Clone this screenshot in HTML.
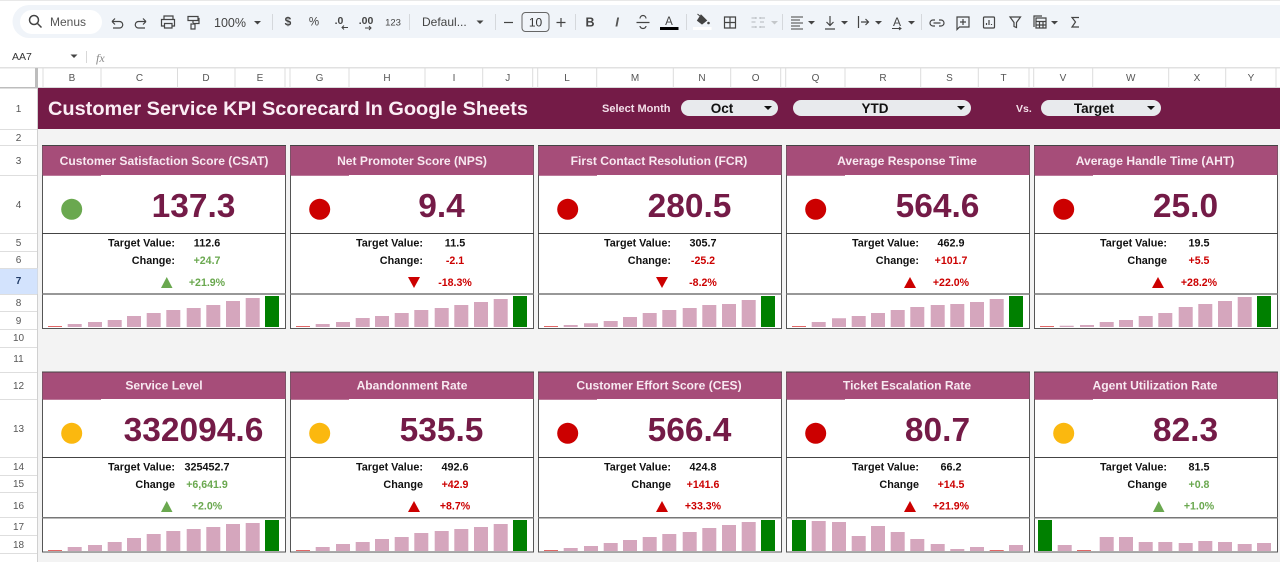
<!DOCTYPE html>
<html><head><meta charset="utf-8"><title>Customer Service KPI Scorecard</title>
<style>
html,body{margin:0;padding:0;background:#fff;width:1280px;height:562px;overflow:hidden}
svg{display:block}
text{font-family:"Liberation Sans",sans-serif}
.ch{font-size:10px;fill:#555;text-anchor:middle}
.rh{font-size:10px;fill:#555;text-anchor:middle}
.ic{fill:none;stroke:#444;stroke-width:1.2}
.ict{fill:#444;stroke:none}
.tb{font-size:12px;fill:#444}
.h{font-size:12.1px;font-weight:700;fill:#f8e9f1;text-anchor:middle}
.v{font-size:33.5px;font-weight:700;fill:#741b47;text-anchor:middle}
.l{font-size:10.8px;font-weight:700;fill:#111;text-anchor:end}
.t{font-size:10.8px;font-weight:700;fill:#111;text-anchor:middle}
.g{font-size:10.6px;font-weight:700;fill:#6aa84f;text-anchor:middle}
.r{font-size:10.6px;font-weight:700;fill:#cc0000;text-anchor:middle}
.dd{font-size:13.5px;font-weight:700;fill:#111;text-anchor:middle}
.f{fill:#fff;stroke:#555;stroke-width:1}
.d{stroke:#444;stroke-width:1}
.d2{stroke:#777;stroke-width:1.5}
.b{fill:none;stroke:#d5a6bd;stroke-width:14}
.bg{fill:none;stroke:#008000;stroke-width:14}
.br{fill:none;stroke:#e06666;stroke-width:14}
</style></head><body>
<svg width="1280" height="562" viewBox="0 0 1280 562" xmlns="http://www.w3.org/2000/svg">
<rect width="1280" height="562" fill="#fff"/>
<rect y="0" width="1280" height="1" fill="#e8e8e8"/>
<!-- toolbar -->
<path d="M1280 5H29a16.500 16.500 0 0 0 0 33H1280z" fill="#f0f4f9"/>
<rect x="20" y="10" width="82" height="24" rx="12" fill="#fff"/>
<circle cx="34" cy="20" r="4.500" class="ic" style="stroke-width:1.500"/><path d="M37.500 23.500l4 4" class="ic" style="stroke-width:1.500"/>
<text x="50" y="26" class="tb" style="fill:#555">Menus</text>
<path d="M112 21.500h7.500a3.200 3.200 0 0 1 0 6.500H113M112 21.500l3-3M112 21.500l3 3" class="ic"/>
<path d="M146 21.500h-7.500a3.200 3.200 0 0 0 0 6.500H145M146 21.500l-3-3M146 21.500l-3 3" class="ic"/>
<path d="M164 20v-4h9v4M164 26h-2.500v-6.500h13V26H172M164.500 23.500h7.500v4.500h-7.500z" class="ic"/>
<path d="M188 16.500h10v4h-10zM193 20.500v2.500M191 24h4v5h-4z M198 18.500h1v5h-6" class="ic"/>
<text x="214" y="27" font-size="12.500" fill="#444">100%</text>
<path d="M254 21h7l-3.500 3.500z" class="ict"/>
<path d="M272.500 14v16" stroke="#d5d8dc"/>
<text x="288" y="25.500" font-size="12" font-weight="700" fill="#444" text-anchor="middle">$</text>
<text x="314" y="25.500" font-size="11.500" fill="#444" text-anchor="middle">%</text>
<text x="339" y="24" font-size="10.500" font-weight="700" fill="#444" text-anchor="middle">.0</text>
<path d="M348 27.500h-6M344 25.500l-2 2 2 2" class="ic" style="stroke-width:1"/>
<text x="366" y="24" font-size="10.500" font-weight="700" fill="#444" text-anchor="middle">.00</text>
<path d="M365 28h6M369 26l2 2-2 2" class="ic" style="stroke-width:1"/>
<text x="393" y="25.500" font-size="9.500" fill="#444" text-anchor="middle">123</text>
<path d="M409.500 14v16" stroke="#d5d8dc"/>
<text x="422" y="26" font-size="12" fill="#444">Defaul...</text>
<path d="M476.500 20.500h7l-3.500 3.500z" class="ict"/>
<path d="M495.500 14v16" stroke="#d5d8dc"/>
<path d="M504 22.500h9" class="ic"/>
<rect x="522" y="12.500" width="27" height="19" rx="3.500" fill="#f0f4f9" stroke="#666"/>
<text x="535.500" y="26.500" font-size="12" fill="#333" text-anchor="middle">10</text>
<path d="M556.500 22.500h9M561 18v9" class="ic"/>
<path d="M575.500 14v16" stroke="#d5d8dc"/>
<text x="590" y="26.500" font-size="12.500" font-weight="700" fill="#444" text-anchor="middle">B</text>
<text x="617" y="26.500" font-size="13" font-style="italic" font-weight="700" fill="#555" text-anchor="middle">I</text>
<path d="M636.500 22.500h13M640 18.500a3 3 0 0 1 6 0M640 26a3 2.500 0 0 0 6 0" class="ic"/>
<text x="669" y="25" font-size="11.500" fill="#444" text-anchor="middle">A</text>
<rect x="660" y="27" width="18.500" height="3" fill="#000"/>
<path d="M686.500 14v16" stroke="#d5d8dc"/>
<path d="M701 15l5.500 5.500-4.500 3.500-4.500-3.500zM697.500 14l3.500 3" fill="#444" stroke="#444"/>
<circle cx="708.500" cy="23" r="1.300" fill="#444"/>
<rect x="693" y="27" width="18.500" height="3" fill="#fff"/>
<path d="M724.500 17h11v11h-11zM730 17v11M724.500 22.500h11" class="ic"/>
<path d="M751.500 18h5M751.500 22h4M751.500 27h5M760 18h5M760 22h4M760 27h5M756 17v2M760 17v2M756 26v2M760 26v2" class="ic" style="stroke:#b5b9bd;stroke-width:1"/>
<path d="M771 21h7l-3.500 3.500z" fill="#c4c7ca"/>
<path d="M782.500 14v16" stroke="#d5d8dc"/>
<path d="M791 17h12M791 20h9M791 23h12M791 26h9M791 29h12" class="ic" style="stroke-width:1"/>
<path d="M808 21h7l-3.500 3.500z" class="ict"/>
<path d="M830 16v9M826.500 22l3.500 3.500 3.500-3.500M825 29h10" class="ic"/>
<path d="M841 21h7l-3.500 3.500z" class="ict"/>
<path d="M858.500 16v12M861 22h7M865.500 19l3 3-3 3" class="ic"/>
<path d="M875 21h7l-3.500 3.500z" class="ict"/>
<text x="897" y="26" font-size="12" fill="#444" text-anchor="middle">A</text>
<path d="M892 28.500h9M899 27l2 1.500-2 1.500" class="ic" style="stroke-width:1"/>
<path d="M908 21h7l-3.500 3.500z" class="ict"/>
<path d="M921.500 14v16" stroke="#d5d8dc"/>
<path d="M935 20h-2a3 3 0 0 0 0 6h2M939 20h2a3 3 0 0 1 0 6H939M933.500 23h7" class="ic"/>
<path d="M957 17h12v10h-9.500l-2.500 2.500zM963 19v6M960 22h6" class="ic"/>
<rect x="983.500" y="17" width="11" height="11" rx="1" class="ic"/><path d="M986.500 25v-2M989 25v-5M991.500 25v-1" class="ic"/>
<path d="M1010 17h10.500l-4 5.500v5l-2.500-1v-4z" class="ic"/>
<path d="M1034 27v-11h8M1036 18h10v10h-10zM1036 21.500h10M1039.500 21.500V28M1043 21.500V28M1036 25h10" class="ic"/>
<path d="M1051 21h7l-3.500 3.500z" class="ict"/>
<path d="M1079 17.500h-7l3.500 4.500-3.500 5h7" class="ic"/>
<!-- formula bar -->
<text x="12" y="60" font-size="10.500" fill="#333">AA7</text>
<path d="M70.500 54.500h7l-3.500 3.500z" class="ict"/>
<path d="M86.500 51v12" stroke="#d8d8d8"/>
<text x="96" y="62" font-size="12" font-style="italic" fill="#888" style="font-family:'Liberation Serif',serif">fx</text>
<!-- sheet bg -->
<rect x="0" y="67" width="1280" height="21" fill="#fff"/>
<rect x="38" y="88" width="1242" height="474" fill="#f3f3f3"/>
<rect y="67" width="1280" height="1.500" fill="#e1e1e1"/>
<rect x="0" y="87" width="38" height="1.500" fill="#bdbdbd"/>
<rect x="35" y="68" width="3" height="20" fill="#bdbdbd"/>
<path d="M38 87.500H1280" stroke="#d9d9d9"/>
<path d="M37.500 88V562" stroke="#d0d0d0"/>
<path d="M43 68v20M101 68v20M177.500 68v20M235 68v20M285 68v20M290 68v20M349 68v20M425 68v20M482.700 68v20M532.700 68v20M537.700 68v20M596.700 68v20M673.300 68v20M730.700 68v20M780.700 68v20M785.700 68v20M845 68v20M920.700 68v20M978.300 68v20M1029 68v20M1033.700 68v20M1092.700 68v20M1168.700 68v20M1225.700 68v20M1276 68v20" stroke="#dcdcdc"/>
<text class="ch" x="72" y="81">B</text><text class="ch" x="139.500" y="81">C</text><text class="ch" x="206" y="81">D</text><text class="ch" x="260" y="81">E</text>
<text class="ch" x="319.500" y="81">G</text><text class="ch" x="387" y="81">H</text><text class="ch" x="454" y="81">I</text><text class="ch" x="507.700" y="81">J</text>
<text class="ch" x="567" y="81">L</text><text class="ch" x="635" y="81">M</text><text class="ch" x="702" y="81">N</text><text class="ch" x="755.700" y="81">O</text>
<text class="ch" x="815.500" y="81">Q</text><text class="ch" x="883" y="81">R</text><text class="ch" x="949.500" y="81">S</text><text class="ch" x="1003.500" y="81">T</text>
<text class="ch" x="1063" y="81">V</text><text class="ch" x="1130.700" y="81">W</text><text class="ch" x="1197" y="81">X</text><text class="ch" x="1251" y="81">Y</text>
<!-- row headers -->
<rect x="0" y="268" width="37.500" height="26" fill="#d3e3fd"/>
<path d="M0 129.500h37M0 145.500h37M0 175.500h37M0 233.500h37M0 251.500h37M0 268.500h37M0 294.500h37M0 311.500h37M0 329.500h37M0 347.500h37M0 372.500h37M0 399.500h37M0 457.500h37M0 475.500h37M0 492.500h37M0 517.500h37M0 535.500h37M0 553.500h37" stroke="#dedede"/>
<text class="rh" x="18.500" y="112">1</text><text class="rh" x="18.500" y="141">2</text><text class="rh" x="18.500" y="164">3</text><text class="rh" x="18.500" y="208">4</text><text class="rh" x="18.500" y="246">5</text><text class="rh" x="18.500" y="263">6</text><text class="rh" x="18.500" y="284" style="font-weight:700;fill:#1f3a66">7</text><text class="rh" x="18.500" y="306">8</text><text class="rh" x="18.500" y="324">9</text><text class="rh" x="18.500" y="341">10</text><text class="rh" x="18.500" y="362">11</text><text class="rh" x="18.500" y="389">12</text><text class="rh" x="18.500" y="432">13</text><text class="rh" x="18.500" y="470">14</text><text class="rh" x="18.500" y="487">15</text><text class="rh" x="18.500" y="509">16</text><text class="rh" x="18.500" y="530">17</text><text class="rh" x="18.500" y="548">18</text>
<!-- title band -->
<rect x="38" y="88" width="1242" height="41" fill="#741b47"/>
<text x="48" y="115" font-size="19" font-weight="700" fill="#fbeef5" textLength="480" lengthAdjust="spacingAndGlyphs">Customer Service KPI Scorecard In Google Sheets</text>
<text x="602" y="112" font-size="11" font-weight="700" fill="#f3dfe9">Select Month</text>
<rect x="681" y="100" width="97" height="16" rx="8" fill="#e8eaed"/>
<text class="dd" x="722" y="113">Oct</text><path d="M764 106h8l-4 4z" fill="#111"/>
<rect x="793" y="100" width="178" height="16" rx="8" fill="#e8eaed"/>
<text class="dd" x="875" y="113">YTD</text><path d="M957 106h8l-4 4z" fill="#111"/>
<text x="1016" y="112" font-size="10.500" font-weight="700" fill="#f3dfe9">Vs.</text>
<rect x="1041" y="100" width="120" height="16" rx="8" fill="#e8eaed"/>
<text class="dd" x="1094" y="113">Target</text><path d="M1147 106h8l-4 4z" fill="#111"/>

<!-- ROW 1 -->
<g transform="translate(42,0)">
<rect class="f" x=".5" y="145.500" width="243" height="183"/><rect x=".5" y="146" width="243" height="29" fill="#a64d79"/><path class="d" d="M0 145.500h244"/><path class="d" d="M0 233.500h244"/><path class="d2" d="M0 294h244"/>
<text class="h" x="122" y="165">Customer Satisfaction Score (CSAT)</text>
<circle cx="29.700" cy="209.300" r="10.500" fill="#6aa84f"/><text class="v" x="151.500" y="217">137.3</text>
<text class="l" x="133" y="246.500">Target Value:</text><text class="t" x="165" y="246.500">112.6</text>
<text class="l" x="133" y="264">Change:</text><text class="g" x="165" y="264">+24.7</text>
<path d="M119 288h11.500l-5.750-11z" fill="#6aa84f"/><text class="g" x="165" y="286">+21.9%</text>
<g transform="translate(0,327)"><path class="br" d="M13 0v-1"/><path class="b" d="M32.700 0v-3M53 0v-5M72.700 0v-7M92 0v-11M111.700 0v-14M131.300 0v-17M151.700 0v-19M171.300 0v-22M191 0v-26M210.700 0v-29"/><path class="bg" d="M230 0v-31"/></g>
</g>
<g transform="translate(290,0)">
<rect class="f" x=".5" y="145.500" width="243" height="183"/><rect x=".5" y="146" width="243" height="29" fill="#a64d79"/><path class="d" d="M0 145.500h244"/><path class="d" d="M0 233.500h244"/><path class="d2" d="M0 294h244"/>
<text class="h" x="122" y="165">Net Promoter Score (NPS)</text>
<circle cx="29.700" cy="209.300" r="10.500" fill="#cc0000"/><text class="v" x="151.500" y="217">9.4</text>
<text class="l" x="133" y="246.500">Target Value:</text><text class="t" x="165" y="246.500">11.5</text>
<text class="l" x="133" y="264">Change:</text><text class="r" x="165" y="264">-2.1</text>
<path d="M118 277h12l-6 11z" fill="#cc0000"/><text class="r" x="165" y="286">-18.3%</text>
<g transform="translate(0,327)"><path class="br" d="M13 0v-1"/><path class="b" d="M32.700 0v-3M53 0v-5M72.700 0v-9M92 0v-11M111.700 0v-14M131.300 0v-17M151.700 0v-19M171.300 0v-22M191 0v-25M210.700 0v-28"/><path class="bg" d="M230 0v-31"/></g>
</g>
<g transform="translate(538,0)">
<rect class="f" x=".5" y="145.500" width="243" height="183"/><rect x=".5" y="146" width="243" height="29" fill="#a64d79"/><path class="d" d="M0 145.500h244"/><path class="d" d="M0 233.500h244"/><path class="d2" d="M0 294h244"/>
<text class="h" x="121" y="165">First Contact Resolution (FCR)</text>
<circle cx="29.700" cy="209.300" r="10.500" fill="#cc0000"/><text class="v" x="151.500" y="217">280.5</text>
<text class="l" x="133" y="246.500">Target Value:</text><text class="t" x="165" y="246.500">305.7</text>
<text class="l" x="133" y="264">Change:</text><text class="r" x="165" y="264">-25.2</text>
<path d="M118 277h12l-6 11z" fill="#cc0000"/><text class="r" x="165" y="286">-8.2%</text>
<g transform="translate(0,327)"><path class="br" d="M13 0v-1"/><path class="b" d="M32.700 0v-2M53 0v-3.700M72.700 0v-6M92 0v-10M111.700 0v-14M131.300 0v-17M151.700 0v-19M171.300 0v-22M191 0v-23M210.700 0v-27"/><path class="bg" d="M230 0v-31"/></g>
</g>
<g transform="translate(786,0)">
<rect class="f" x=".5" y="145.500" width="243" height="183"/><rect x=".5" y="146" width="243" height="29" fill="#a64d79"/><path class="d" d="M0 145.500h244"/><path class="d" d="M0 233.500h244"/><path class="d2" d="M0 294h244"/>
<text class="h" x="121" y="165">Average Response Time</text>
<circle cx="29.700" cy="209.300" r="10.500" fill="#cc0000"/><text class="v" x="151.500" y="217">564.6</text>
<text class="l" x="133" y="246.500">Target Value:</text><text class="t" x="165" y="246.500">462.9</text>
<text class="l" x="133" y="264">Change:</text><text class="r" x="165" y="264">+101.7</text>
<path d="M118 288h12l-6-11z" fill="#cc0000"/><text class="r" x="165" y="286">+22.0%</text>
<g transform="translate(0,327)"><path class="br" d="M13 0v-1"/><path class="b" d="M32.700 0v-5M53 0v-8.700M72.700 0v-11M92 0v-14M111.700 0v-17M131.300 0v-20M151.700 0v-22M171.300 0v-23M191 0v-25M210.700 0v-28"/><path class="bg" d="M230 0v-31"/></g>
</g>
<g transform="translate(1034,0)">
<rect class="f" x=".5" y="145.500" width="243" height="183"/><rect x=".5" y="146" width="243" height="29" fill="#a64d79"/><path class="d" d="M0 145.500h244"/><path class="d" d="M0 233.500h244"/><path class="d2" d="M0 294h244"/>
<text class="h" x="121" y="165">Average Handle Time (AHT)</text>
<circle cx="29.700" cy="209.300" r="10.500" fill="#cc0000"/><text class="v" x="151.500" y="217">25.0</text>
<text class="l" x="133" y="246.500">Target Value:</text><text class="t" x="165" y="246.500">19.5</text>
<text class="l" x="133" y="264">Change</text><text class="r" x="165" y="264">+5.5</text>
<path d="M118 288h12l-6-11z" fill="#cc0000"/><text class="r" x="165" y="286">+28.2%</text>
<g transform="translate(0,327)"><path class="br" d="M13 0v-1"/><path class="b" d="M32.700 0v-1.300M53 0v-2M72.700 0v-5M92 0v-7M111.700 0v-11M131.300 0v-14M151.700 0v-20M171.300 0v-23M191 0v-26M210.700 0v-30"/><path class="bg" d="M230 0v-31"/></g>
</g>

<!-- ROW 2 -->
<g transform="translate(42,0)">
<rect class="f" x=".5" y="372" width="243" height="180"/><rect x=".5" y="372.500" width="243" height="26.500" fill="#a64d79"/><path class="d" d="M0 372h244"/><path class="d" d="M0 457.500h244"/><path class="d2" d="M0 517.700h244"/>
<text class="h" x="122" y="389.500">Service Level</text>
<circle cx="29.700" cy="433.300" r="10.500" fill="#fbb80f"/><text class="v" x="151.500" y="441">332094.6</text>
<text class="l" x="133" y="470.500">Target Value:</text><text class="t" x="165" y="470.500">325452.7</text>
<text class="l" x="133" y="488">Change</text><text class="g" x="165" y="488">+6,641.9</text>
<path d="M119 512h11.500l-5.750-11z" fill="#6aa84f"/><text class="g" x="165" y="509.500">+2.0%</text>
<g transform="translate(0,551)"><path class="br" d="M13 0v-1"/><path class="b" d="M32.700 0v-4M53 0v-6M72.700 0v-9M92 0v-13M111.700 0v-17M131.300 0v-20M151.700 0v-22M171.300 0v-24M191 0v-27M210.700 0v-28"/><path class="bg" d="M230 0v-31"/></g>
</g>
<g transform="translate(290,0)">
<rect class="f" x=".5" y="372" width="243" height="180"/><rect x=".5" y="372.500" width="243" height="26.500" fill="#a64d79"/><path class="d" d="M0 372h244"/><path class="d" d="M0 457.500h244"/><path class="d2" d="M0 517.700h244"/>
<text class="h" x="122" y="389.500">Abandonment Rate</text>
<circle cx="29.700" cy="433.300" r="10.500" fill="#fbb80f"/><text class="v" x="151.500" y="441">535.5</text>
<text class="l" x="133" y="470.500">Target Value:</text><text class="t" x="165" y="470.500">492.6</text>
<text class="l" x="133" y="488">Change</text><text class="r" x="165" y="488">+42.9</text>
<path d="M118 512h12l-6-11z" fill="#cc0000"/><text class="r" x="165" y="509.500">+8.7%</text>
<g transform="translate(0,551)"><path class="br" d="M13 0v-1"/><path class="b" d="M32.700 0v-4M53 0v-7M72.700 0v-9M92 0v-12M111.700 0v-14M131.300 0v-18M151.700 0v-20M171.300 0v-22M191 0v-24M210.700 0v-27"/><path class="bg" d="M230 0v-31"/></g>
</g>
<g transform="translate(538,0)">
<rect class="f" x=".5" y="372" width="243" height="180"/><rect x=".5" y="372.500" width="243" height="26.500" fill="#a64d79"/><path class="d" d="M0 372h244"/><path class="d" d="M0 457.500h244"/><path class="d2" d="M0 517.700h244"/>
<text class="h" x="121" y="389.500">Customer Effort Score (CES)</text>
<circle cx="29.700" cy="433.300" r="10.500" fill="#cc0000"/><text class="v" x="151.500" y="441">566.4</text>
<text class="l" x="133" y="470.500">Target Value:</text><text class="t" x="165" y="470.500">424.8</text>
<text class="l" x="133" y="488">Change</text><text class="r" x="165" y="488">+141.6</text>
<path d="M118 512h12l-6-11z" fill="#cc0000"/><text class="r" x="165" y="509.500">+33.3%</text>
<g transform="translate(0,551)"><path class="br" d="M13 0v-1"/><path class="b" d="M32.700 0v-3M53 0v-5M72.700 0v-8M92 0v-11M111.700 0v-14M131.300 0v-17M151.700 0v-19M171.300 0v-23M191 0v-26M210.700 0v-29"/><path class="bg" d="M230 0v-31"/></g>
</g>
<g transform="translate(786,0)">
<rect class="f" x=".5" y="372" width="243" height="180"/><rect x=".5" y="372.500" width="243" height="26.500" fill="#a64d79"/><path class="d" d="M0 372h244"/><path class="d" d="M0 457.500h244"/><path class="d2" d="M0 517.700h244"/>
<text class="h" x="121" y="389.500">Ticket Escalation Rate</text>
<circle cx="29.700" cy="433.300" r="10.500" fill="#cc0000"/><text class="v" x="151.500" y="441">80.7</text>
<text class="l" x="133" y="470.500">Target Value:</text><text class="t" x="165" y="470.500">66.2</text>
<text class="l" x="133" y="488">Change</text><text class="r" x="165" y="488">+14.5</text>
<path d="M118 512h12l-6-11z" fill="#cc0000"/><text class="r" x="165" y="509.500">+21.9%</text>
<g transform="translate(0,551)"><path class="bg" d="M13 0v-31"/><path class="b" d="M32.700 0v-30M53 0v-29M72.700 0v-15M92 0v-25M111.700 0v-19M131.300 0v-12M151.700 0v-7M171.300 0v-2M191 0v-4M230 0v-6"/><path class="br" d="M210.700 0v-1"/></g>
</g>
<g transform="translate(1034,0)">
<rect class="f" x=".5" y="372" width="243" height="180"/><rect x=".5" y="372.500" width="243" height="26.500" fill="#a64d79"/><path class="d" d="M0 372h244"/><path class="d" d="M0 457.500h244"/><path class="d2" d="M0 517.700h244"/>
<text class="h" x="121" y="389.500">Agent Utilization Rate</text>
<circle cx="29.700" cy="433.300" r="10.500" fill="#fbb80f"/><text class="v" x="151.500" y="441">82.3</text>
<text class="l" x="133" y="470.500">Target Value:</text><text class="t" x="165" y="470.500">81.5</text>
<text class="l" x="133" y="488">Change</text><text class="g" x="165" y="488">+0.8</text>
<path d="M119 512h11.500l-5.750-11z" fill="#6aa84f"/><text class="g" x="165" y="509.500">+1.0%</text>
<g transform="translate(0,551)"><path class="bg" d="M11 0v-31"/><path class="b" d="M30.700 0v-6M72.700 0v-14M92 0v-14M111.700 0v-9M131.300 0v-9M151.700 0v-8M171.300 0v-10M191 0v-9M210.700 0v-7M230 0v-8"/><path class="br" d="M50 0v-1"/></g>
</g>
<!-- header notches under first column of each card -->
<path fill="#a64d79" d="M43 175h58v.8H43zM291 175h58v.8h-58zM539 175h58v.8h-58zM787 175h58v.8h-58zM1035 175h58v.8h-58zM43 399h58v.8H43zM291 399h58v.8h-58zM539 399h58v.8h-58zM787 399h58v.8h-58zM1035 399h58v.8h-58z"/>
</svg>
</body></html>
